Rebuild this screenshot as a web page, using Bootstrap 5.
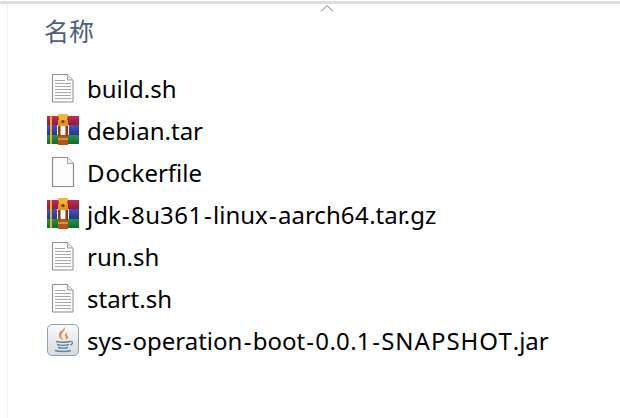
<!DOCTYPE html>
<html lang="zh-CN">
<head>
    <meta charset="UTF-8">
    <title>名称</title>
    <link rel="stylesheet" href="https://cdn.jsdelivr.net/npm/bootstrap@5.3.0/dist/css/bootstrap.min.css">
    <style>
        html, body { height: 100%; background: #fff; overflow: hidden; }
        .top-rule { height: 3px; margin-top: 1px; background: #dedede; }
        .sort-arrow { height: 0; }
        .sort-arrow svg { display: block; margin-left: 320px; }
        .file-pane { margin-left: 7px; height: 414px; border-left: 1px solid #f1f1f1; padding-left: 36px; }
        .col-title { height: 54px; padding-top: 9px; font: 25px/34px "Noto Sans CJK SC", sans-serif; color: #4c607a; }
        .file-list { padding-top: 10px; padding-left: 1px; }
        .file-row { height: 42px; font: 24px/42px "Noto Sans", sans-serif; color: #000; white-space: nowrap; }
        .file-ico { width: 36px; height: 36px; flex: none; margin-right: 6px; display: block; }
        .ch-hy { padding: 0 1.25px; }
        .ch-num { letter-spacing: .5px; }
        .ch-cap { letter-spacing: 1px; }
    </style>
</head>
<body>

<div class="top-rule"></div>
<div class="sort-arrow">
    <svg width="14" height="8" viewBox="0 0 14 8"><path d="M1 7.500 7 1.500l6 6" fill="none" stroke="#777" stroke-width="1"/></svg>
</div>

<svg width="0" height="0" class="position-absolute">
    <defs>
        <linearGradient id="rar-red" x1="0" y1="0" x2="0" y2="1"><stop offset="0" stop-color="#c22a58"/><stop offset="1" stop-color="#951a38"/></linearGradient>
        <linearGradient id="rar-blue" x1="0" y1="0" x2="0" y2="1"><stop offset="0" stop-color="#4a52bc"/><stop offset="1" stop-color="#2c3290"/></linearGradient>
        <linearGradient id="rar-green" x1="0" y1="0" x2="0" y2="1"><stop offset="0" stop-color="#2a9346"/><stop offset="1" stop-color="#136a30"/></linearGradient>
        <linearGradient id="jar-bg" x1="0" y1="0" x2="0" y2="1"><stop offset="0" stop-color="#fafbfb"/><stop offset="1" stop-color="#d5dade"/></linearGradient>
        <symbol id="ico-text" viewBox="0 0 36 36">
            <path d="M7.500 3.500h15l5.500 5.500v22H7.500z" fill="#fdfdfd" stroke="#8c8c8c"/>
            <path d="M22.500 3.500V9H28" fill="#e4e4e4" stroke="#a5a5a5"/>
            <path d="M10 9.500h10M10 12.500h16M10 15.500h16M10 18.500h16M10 21.500h16M10 24.500h16M10 27.500h16" stroke="#a9a9a9"/>
        </symbol>
        <symbol id="ico-blank" viewBox="0 0 36 36">
            <path d="M7.500 2.500h15l6 6v23h-21z" fill="#fcfcfc" stroke="#8a8a8a" stroke-width="1.200"/>
            <path d="M22.500 2.500v6h6" fill="#efefef" stroke="#a5a5a5"/>
        </symbol>
        <symbol id="ico-rar" viewBox="0 0 36 36">
            <path d="M2 3h32v9H2z" fill="url(#rar-red)"/>
            <path d="M2 12h32v10H2z" fill="url(#rar-blue)"/>
            <path d="M2 22h32v9H2z" fill="url(#rar-green)"/>
            <path d="M5 3h2v28H5z" fill="#d9b23a"/>
            <path d="M12 12h12v10H12z" fill="#f3efe6"/>
            <path d="M13 1h10l-1 6h-8z" fill="#f2b632"/>
            <path d="M13 7h10v6H13z" fill="#e0962a"/>
            <circle cx="18" cy="8.500" r="1.500" fill="#6b3410"/>
            <path d="M13 22h10v10H13z" fill="#b4561c"/>
            <path d="M13 13h2.500v10H13zM20.500 13H23v10h-2.500z" fill="#8a3f12"/>
            <path d="M16.500 13h3v9h-3z" fill="#fff"/>
            <path d="M13 26h10" stroke="#e8a04a" stroke-width="1.500"/>
        </symbol>
        <symbol id="ico-jar" viewBox="0 0 36 36">
            <rect x="2.500" y="1.500" width="31" height="31" rx="4.500" fill="url(#jar-bg)" stroke="#8fa2b4"/>
            <path d="M19.500 4c2 4-5 6-3 10 .7 1.400 1.500 2 2 3-3-1-5-3-4.500-6 .5-3 5-4 5.500-7z" fill="#e58a3c"/>
            <path d="M23 9c-3 1.500-4 3-2.500 5 .6.800.8 2-.2 3 3-1 3.500-3 2-4.500-1-1-.8-2.300.7-3.500z" fill="#e58a3c"/>
            <path d="M11 18.500c3 1 11 1 14 0M12 21.500c3 1 9 1 12 0M13 24.500c3 .8 7 .8 10 0" fill="none" stroke="#5f8298" stroke-width="1.400"/>
            <path d="M25 18.500c3-.5 3.500 2.500 0 3.500" fill="none" stroke="#5f8298" stroke-width="1.200"/>
            <path d="M10 27.500c4 1.300 12 1.300 16 0" fill="none" stroke="#5f8298" stroke-width="1.400"/>
        </symbol>
    </defs>
</svg>

<div class="file-pane">
    <div class="col-title">名称</div>
    <div class="file-list" id="fileList"></div>
</div>

<script>
    const files = [
        ['ico-text', 'build.sh'],
        ['ico-rar', 'debian.tar'],
        ['ico-blank', 'Dockerfile'],
        ['ico-rar', 'jdk-8u361-linux-aarch64.tar.gz'],
        ['ico-text', 'run.sh'],
        ['ico-text', 'start.sh'],
        ['ico-jar', 'sys-operation-boot-0.0.1-SNAPSHOT.jar']
    ];

    // hyphens, digits and capitals run wider in the original font
    function spaced(name) {
        return name
            .replace(/-/g, '<span class="ch-hy">-</span>')
            .replace(/[0-9]+/g, m => `<span class="ch-num">${m}</span>`)
            .replace(/[A-Z]+/g, m => `<span class="ch-cap">${m}</span>`);
    }

    const list = document.getElementById('fileList');
    files.forEach(f => {
        const row = document.createElement('div');
        row.className = 'file-row d-flex align-items-center';
        row.innerHTML = `<svg class="file-ico"><use href="#${f[0]}"/></svg><span>${spaced(f[1])}</span>`;
        list.appendChild(row);
    });
</script>

<script src="https://cdn.jsdelivr.net/npm/bootstrap@5.3.0/dist/js/bootstrap.bundle.min.js"></script>
</body>
</html>
